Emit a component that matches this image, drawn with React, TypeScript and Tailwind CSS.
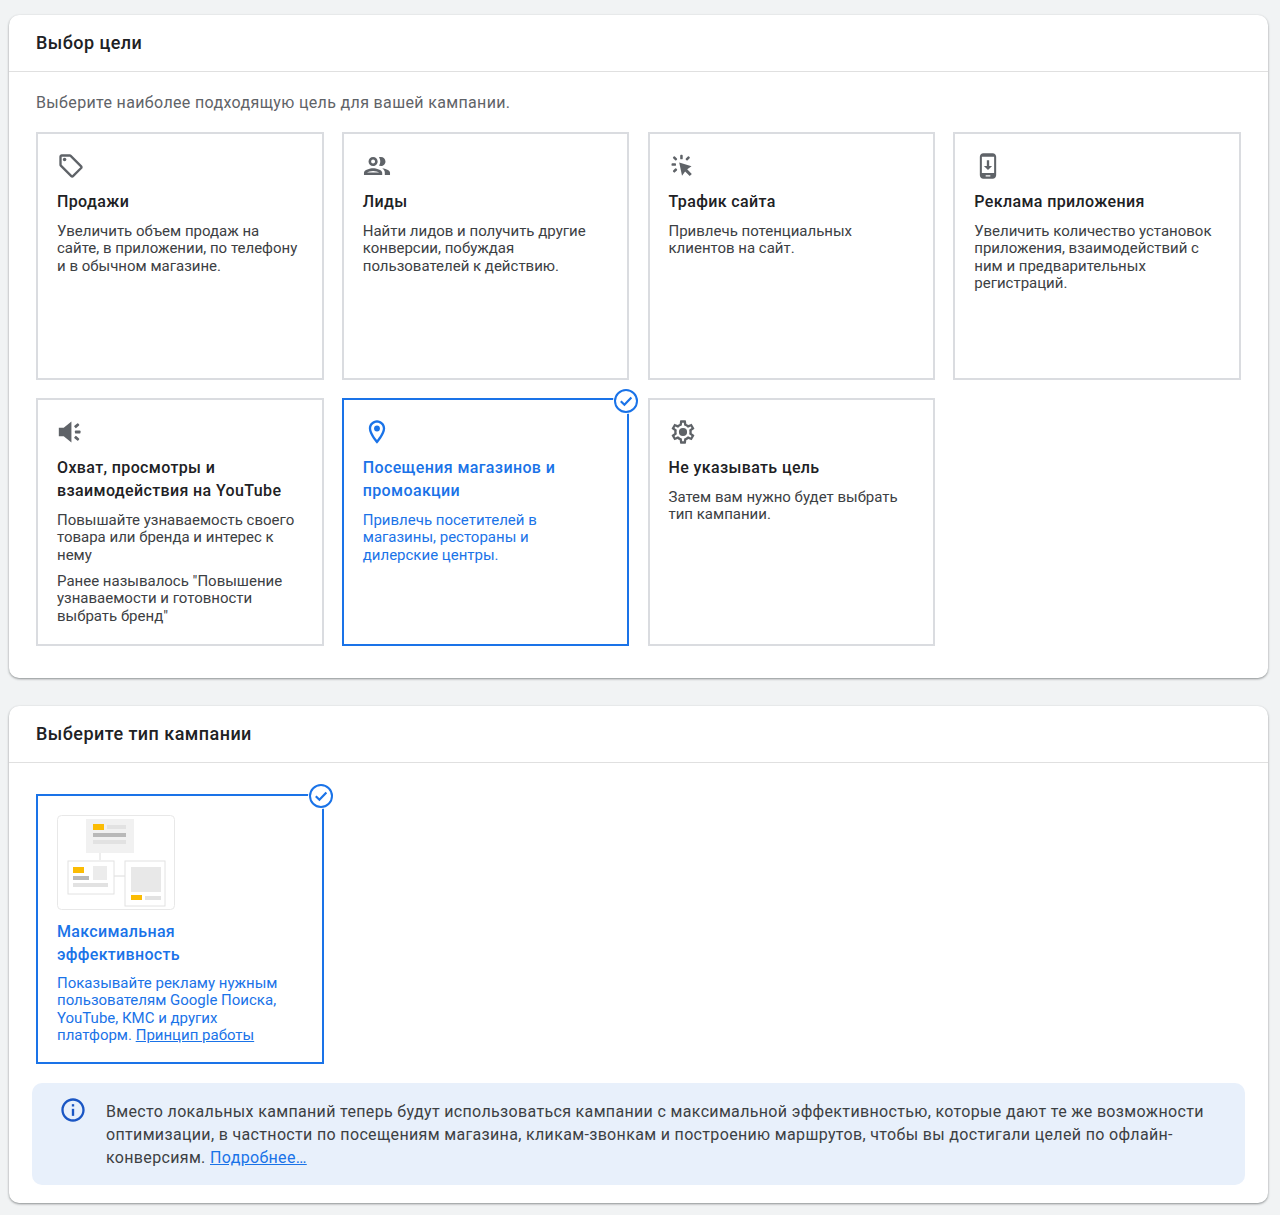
import React from "react";

const gray = "#5f6368";

const Tag = () => (
  <svg width="28" height="28" viewBox="0 0 24 24" fill={gray}>
    <path d="M21.41 11.58l-9-9C12.05 2.22 11.55 2 11 2H4c-1.1 0-2 .9-2 2v7c0 .55.22 1.05.59 1.42l9 9c.36.36.86.58 1.41.58s1.05-.22 1.41-.59l7-7c.37-.36.59-.86.59-1.41s-.23-1.06-.59-1.42zM13 20.01L4 11V4h7v-.01l9 9-7 7.02z" />
    <circle cx="6.5" cy="6.5" r="1.5" />
  </svg>
);
const People = () => (
  <svg width="28" height="28" viewBox="1.25 1.25 21.5 21.5" fill={gray}>
    <path d="M9 13.75c-2.34 0-7 1.17-7 3.5V19h14v-1.75c0-2.33-4.66-3.5-7-3.5zM4.34 17c.84-.58 2.87-1.25 4.66-1.25s3.82.67 4.66 1.25H4.34zM9 12c1.93 0 3.5-1.57 3.5-3.5S10.93 5 9 5 5.500 6.570 5.500 8.500 7.070 12 9 12zm0-5c.83 0 1.500.67 1.500 1.500S9.830 10 9 10s-1.500-.67-1.500-1.500S8.170 7 9 7zm7.040 6.810c1.160.84 1.960 1.960 1.960 3.440V19h4v-1.750c0-2.020-3.500-3.170-5.960-3.440zM15 12c1.930 0 3.500-1.570 3.500-3.500S16.930 5 15 5c-.54 0-1.040.13-1.500.35.630.89 1 1.980 1 3.150s-.37 2.260-1 3.150c.46.220.96.350 1.500.350z" />
  </svg>
);
const Click = () => (
  <svg width="28" height="28" viewBox="2.7 2 20 20" fill={gray}>
    <path d="M10 9.500l2 9.500 2.200-3.100 3.300 3.300 1.500-1.500-3.300-3.300 3.100-2.200z" />
    <rect x="10.700" y="4" width="1.800" height="3.200" rx=".6" />
    <rect x="4.500" y="10.100" width="3.200" height="1.800" rx=".6" />
    <rect x="5.400" y="5.700" width="3.200" height="1.800" rx=".6" transform="rotate(45 7 6.600)" />
    <rect x="14.500" y="5.700" width="3.200" height="1.800" rx=".6" transform="rotate(-45 16.100 6.600)" />
    <rect x="5.400" y="14.300" width="3.200" height="1.800" rx=".6" transform="rotate(-45 7 15.200)" />
  </svg>
);
const Phone = () => (
  <svg width="28" height="28" viewBox="0 0 24 24" fill={gray}>
    <path d="M16 1H8C6.340 1 5 2.340 5 4v16c0 1.660 1.340 3 3 3h8c1.660 0 3-1.340 3-3V4c0-1.660-1.340-3-3-3zm-2 20h-4v-1h4v1zm3.250-3H6.750V4h10.500v14z" />
    <path d="M13 7h-2v5H8.500l3.500 3.500 3.500-3.500H13z" />
  </svg>
);
const Speaker = () => (
  <svg width="28" height="28" viewBox="2.7 2 20 20" fill={gray}>
    <path d="M4 9h3.500L13 4.500v15L7.500 15H4z" />
    <rect x="15.500" y="11" width="4" height="2" rx=".5" />
    <rect x="15" y="6.500" width="3.600" height="2" rx=".5" transform="rotate(-40 16.800 7.500)" />
    <rect x="15" y="15.500" width="3.600" height="2" rx=".5" transform="rotate(40 16.800 16.500)" />
  </svg>
);
const Pin = () => (
  <svg width="28" height="28" viewBox="0 0 24 24" fill="#1a73e8">
    <path d="M12 2C8.130 2 5 5.130 5 9c0 5.250 7 13 7 13s7-7.750 7-13c0-3.870-3.130-7-7-7zM7 9c0-2.760 2.240-5 5-5s5 2.240 5 5c0 2.880-2.880 7.190-5 9.880C9.920 16.210 7 11.850 7 9z" />
    <circle cx="12" cy="9" r="2.500" />
  </svg>
);
const Gear = () => (
  <svg width="28" height="28" viewBox="0 0 24 24" fill={gray}>
    <path d="M19.430 12.980c.04-.32.07-.64.07-.98 0-.34-.03-.66-.07-.98l2.110-1.650c.19-.15.24-.42.120-.64l-2-3.460c-.09-.16-.26-.25-.44-.25-.06 0-.12.01-.17.03l-2.490 1c-.52-.4-1.080-.73-1.690-.98l-.38-2.650C14.460 2.180 14.250 2 14 2h-4c-.25 0-.46.18-.49.42l-.38 2.650c-.61.25-1.170.59-1.690.98l-2.490-1c-.06-.02-.12-.03-.18-.03-.17 0-.34.09-.43.25l-2 3.460c-.13.22-.07.49.12.64l2.110 1.650c-.04.32-.07.65-.07.98 0 .33.03.66.07.98l-2.110 1.650c-.19.15-.24.42-.12.64l2 3.460c.09.16.26.25.44.25.06 0 .12-.01.17-.03l2.490-1c.52.4 1.080.73 1.690.98l.38 2.650c.03.24.24.42.49.42h4c.25 0 .46-.18.49-.42l.38-2.650c.61-.25 1.170-.59 1.690-.98l2.490 1c.06.02.12.03.18.03.17 0 .34-.09.43-.25l2-3.460c.12-.22.07-.49-.12-.64l-2.110-1.650zm-1.980-1.710c.04.31.05.52.05.73 0 .21-.02.43-.05.73l-.14 1.130.89.70 1.080.84-.7 1.210-1.270-.51-1.040-.42-.9.680c-.43.32-.84.56-1.250.73l-1.060.43-.16 1.130-.2 1.350h-1.400l-.19-1.350-.16-1.130-1.060-.43c-.43-.18-.83-.41-1.230-.71l-.91-.7-1.060.43-1.270.51-.7-1.210 1.080-.84.89-.7-.14-1.130c-.03-.31-.05-.54-.05-.74s.02-.43.05-.73l.14-1.130-.89-.7-1.080-.84.7-1.210 1.270.51 1.040.42.9-.68c.43-.32.84-.56 1.250-.73l1.060-.43.16-1.130.2-1.350h1.390l.19 1.350.16 1.130 1.060.43c.43.18.83.41 1.230.71l.91.7 1.060-.43 1.270-.51.7 1.210-1.070.85-.89.7.14 1.130z" />
    <circle cx="12" cy="12" r="3.500" />
  </svg>
);
const Check = () => (
  <svg width="26" height="26" viewBox="0 0 26 26" fill="none" stroke="#1a73e8" className="bg-white rounded-full">
    <circle cx="13" cy="13" r="11" strokeWidth="2" />
    <path d="M7.800 13.300l3.600 3.500 7-7.200" strokeWidth="2.200" />
  </svg>
);
const Info = () => (
  <svg width="28" height="28" viewBox="0 0 24 24" fill="#1a56c4">
    <path d="M12 2C6.480 2 2 6.480 2 12s4.480 10 10 10 10-4.480 10-10S17.520 2 12 2zm0 18c-4.410 0-8-3.590-8-8s3.590-8 8-8 8 3.590 8 8-3.590 8-8 8z" />
    <rect x="11" y="11" width="2" height="6" />
    <rect x="11" y="7" width="2" height="2" />
  </svg>
);

const Illustration = () => (
  <svg width="118" height="95" viewBox="0 0 118 95" fill="none" className="block">
    <rect x=".5" y=".5" width="117" height="94" rx="4" fill="#fff" stroke="#e8e8e8" />
    <rect x="29" y="4" width="48" height="34" fill="#f1f1f1" />
    <rect x="36" y="9" width="11" height="6" fill="#fbbc04" />
    <rect x="50" y="10" width="19" height="4" fill="#e2e2e2" />
    <rect x="36" y="18" width="33" height="4" fill="#b9b9b9" />
    <rect x="36" y="25" width="33" height="4" fill="#e2e2e2" />
    <path d="M43 38v7M57 61h11" stroke="#dcdcdc" />
    <rect x="11" y="46" width="46" height="33" fill="#fff" stroke="#e2e2e2" />
    <rect x="16" y="52" width="11" height="6" fill="#fbbc04" />
    <rect x="36" y="51" width="14" height="14" fill="#ececec" />
    <rect x="16" y="61" width="16" height="4" fill="#b9b9b9" />
    <rect x="16" y="68" width="35" height="4" fill="#e2e2e2" />
    <rect x="68" y="46" width="40" height="45" fill="#fff" stroke="#e2e2e2" />
    <rect x="74" y="52" width="30" height="25" fill="#e8e8e8" />
    <rect x="74" y="80" width="11" height="5" fill="#fbbc04" />
    <rect x="88" y="81" width="16" height="4" fill="#e2e2e2" />
  </svg>
);

type GoalProps = {
  icon: React.ReactNode;
  title: React.ReactNode;
  desc: React.ReactNode;
  extra?: React.ReactNode;
  selected?: boolean;
};

const Goal = ({ icon, title, desc, extra, selected }: GoalProps) => (
  <div
    className={
      selected
        ? "relative h-[247.5px] border-2 border-[#1a73e8] bg-white pl-[19px] pr-[21px] pt-[18px]"
        : "relative h-[247.5px] border-2 border-[#dadce0] bg-white pl-[19px] pr-[21px] pt-[18px]"
    }
  >
    {selected && (
      <div className="absolute right-[-12px] top-[-12px]">
        <Check />
      </div>
    )}
    <div className="h-[28px]">{icon}</div>
    <div className={selected ? "mt-[10px] text-[16px] leading-[23px] font-medium tracking-[0.37px] text-[#1a73e8]" : "mt-[10px] text-[16px] leading-[23px] font-medium tracking-[0.37px] text-[#202124]"}>
      {title}
    </div>
    <div className={selected ? "mt-[9.75px] text-[15px] leading-[17.5px] text-[#1a73e8]" : "mt-[9.75px] text-[15px] leading-[17.5px] text-[#3c4043]"}>
      {desc}
    </div>
    {extra && <div className="mt-[8.5px] text-[15px] leading-[17.5px] text-[#3c4043]">{extra}</div>}
  </div>
);

export default function App() {
  return (
    <div className="min-h-[1215px] bg-[#f1f3f4] pl-[9px] pr-[12px] pt-[15px] font-['Roboto',sans-serif]">
      <section className="h-[663px] rounded-[10px] bg-white shadow-[0_1px_2px_rgba(60,64,67,0.4),0_1px_3px_rgba(60,64,67,0.2)]">
        <header className="flex h-[57px] items-center border-b border-[#e0e0e0] px-[27px] pb-[2px] text-[18px] font-medium tracking-[0.45px] text-[#202124]">
          Выбор цели
        </header>
        <p className="px-[27px] pt-[21px] text-[16px] leading-[20px] tracking-[0.35px] text-[#5f6368]">
          Выберите наиболее подходящую цель для вашей кампании.
        </p>
        <div className="mx-[27px] mt-[19px] grid w-[1204.75px] grid-cols-4 gap-x-[18.25px] gap-y-[18.5px]">
          <Goal icon={<Tag />} title="Продажи" desc="Увеличить объем продаж на сайте, в приложении, по телефону и в обычном магазине." />
          <Goal icon={<People />} title="Лиды" desc="Найти лидов и получить другие конверсии, побуждая пользователей к действию." />
          <Goal icon={<Click />} title="Трафик сайта" desc="Привлечь потенциальных клиентов на сайт." />
          <Goal icon={<Phone />} title="Реклама приложения" desc="Увеличить количество установок приложения, взаимодействий с ним и предварительных регистраций." />
          <Goal
            icon={<Speaker />}
            title="Охват, просмотры и взаимодействия на YouTube"
            desc="Повышайте узнаваемость своего товара или бренда и интерес к нему"
            extra={'Ранее называлось "Повышение узнаваемости и готовности выбрать бренд"'}
          />
          <Goal selected icon={<Pin />} title="Посещения магазинов и промоакции" desc="Привлечь посетителей в магазины, рестораны и дилерские центры." />
          <Goal icon={<Gear />} title="Не указывать цель" desc="Затем вам нужно будет выбрать тип кампании." />
        </div>
      </section>

      <section className="mt-[28px] h-[497px] rounded-[10px] bg-white shadow-[0_1px_2px_rgba(60,64,67,0.4),0_1px_3px_rgba(60,64,67,0.2)]">
        <header className="flex h-[57px] items-center border-b border-[#e0e0e0] px-[27px] pb-[2px] text-[18px] font-medium tracking-[0.45px] text-[#202124]">
          Выберите тип кампании
        </header>
        <div className="relative mx-[27px] mt-[31px] h-[270px] w-[288px] border-2 border-[#1a73e8] px-[19px] pt-[19px]">
          <div className="absolute right-[-12px] top-[-13px]">
            <Check />
          </div>
          <Illustration />
          <div className="mt-[10px] w-[180px] text-[16px] leading-[23px] font-medium tracking-[0.33px] text-[#1a73e8]">
            Максимальная эффективность
          </div>
          <div className="mt-[8.75px] w-[232px] text-[15px] leading-[17.5px] text-[#1a73e8]">
            Показывайте рекламу нужным пользователям Google Поиска, YouTube, КМС и других платформ.{" "}
            <a className="underline">Принцип работы</a>
          </div>
        </div>
        <div className="ml-[23px] mt-[19px] flex h-[102px] w-[1213px] rounded-[10px] bg-[#e8f0fb] pl-[27px] pr-[30px] pt-[17px]">
          <div className="mr-[19px] mt-[-4px] shrink-0">
            <Info />
          </div>
          <p className="text-[16px] leading-[23px] tracking-[0.34px] text-[#3c4043]">
            Вместо локальных кампаний теперь будут использоваться кампании с максимальной эффективностью, которые дают те же возможности оптимизации, в частности по посещениям магазина, кликам-звонкам и построению маршрутов, чтобы вы достигали целей по офлайн-конверсиям.{" "}
            <a className="text-[#1a73e8] underline">Подробнее…</a>
          </p>
        </div>
      </section>
    </div>
  );
}
